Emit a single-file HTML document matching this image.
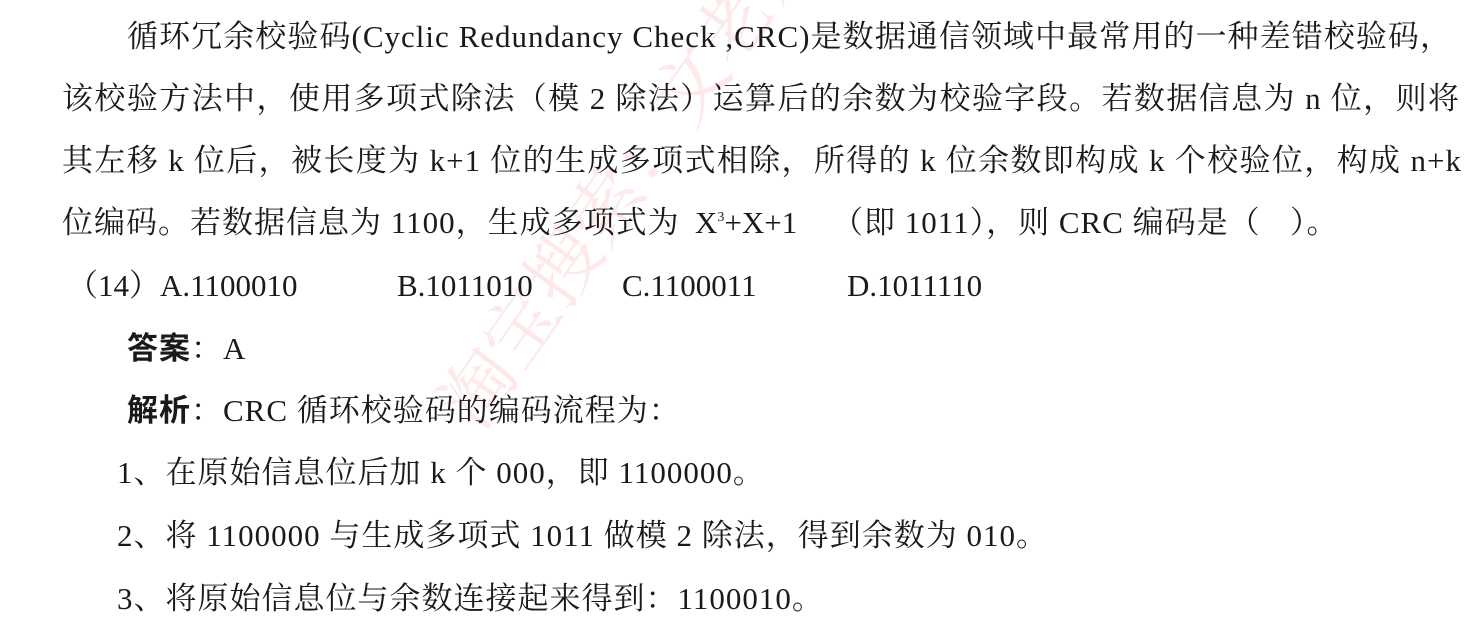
<!DOCTYPE html>
<html><head><meta charset="utf-8"><style>
html,body{margin:0;padding:0;background:#fff;}
body{width:1478px;height:632px;position:relative;overflow:hidden;font-family:"Liberation Serif","Noto Serif CJK SC",serif;font-size:31px;letter-spacing:1px;color:#1a1a1a;}
.l{position:absolute;white-space:nowrap;line-height:40px;height:40px;}
.j{text-align:justify;text-align-last:justify;white-space:normal;}
b{font-family:"Liberation Sans","Noto Sans CJK SC",sans-serif;font-weight:bold;}
.wm{position:absolute;left:410px;top:385px;transform:rotate(-55deg);transform-origin:left top;color:rgba(240,120,120,0.16);font-size:74px;font-family:"Noto Serif CJK SC",serif;white-space:nowrap;letter-spacing:0;}
.sup{font-size:14px;position:relative;top:-12px;line-height:0;}
</style></head><body>
<div class="wm">淘宝搜索：文老师</div>
<div class="l j" style="left:127px;top:17px;width:1325px;">循环冗余校验码(Cyclic Redundancy Check ,CRC)是数据通信领域中最常用的一种差错校验码，</div>
<div class="l j" style="left:62px;top:79px;width:1398px;">该校验方法中，使用多项式除法（模 2 除法）运算后的余数为校验字段。若数据信息为 n 位，则将</div>
<div class="l j" style="left:62px;top:141px;width:1400px;">其左移 k 位后，被长度为 k+1 位的生成多项式相除，所得的 k 位余数即构成 k 个校验位，构成 n+k</div>
<div class="l" style="left:62px;top:203px;">位编码。若数据信息为 1100，生成多项式为</div>
<div class="l" style="left:695px;top:203px;letter-spacing:0;">X<span class="sup">3</span>+X+1</div>
<div class="l" style="left:832px;top:203px;">（即 1011），则 CRC 编码是（</div>
<div class="l" style="left:1290px;top:203px;">）。</div>
<div class="l" style="left:67px;top:266px;letter-spacing:0;">（14）A.1100010</div>
<div class="l" style="left:397px;top:266px;letter-spacing:0;">B.1011010</div>
<div class="l" style="left:622px;top:266px;letter-spacing:0;">C.1100011</div>
<div class="l" style="left:847px;top:266px;letter-spacing:0;">D.1011110</div>
<div class="l" style="left:127px;top:329px;"><b>答案</b>：A</div>
<div class="l" style="left:127px;top:391px;"><b>解析</b>：CRC 循环校验码的编码流程为：</div>
<div class="l" style="left:117px;top:453px;">1、在原始信息位后加 k 个 000，即 1100000。</div>
<div class="l" style="left:117px;top:516px;">2、将 1100000 与生成多项式 1011 做模 2 除法，得到余数为 010。</div>
<div class="l" style="left:117px;top:579px;">3、将原始信息位与余数连接起来得到：1100010。</div>
</body></html>
